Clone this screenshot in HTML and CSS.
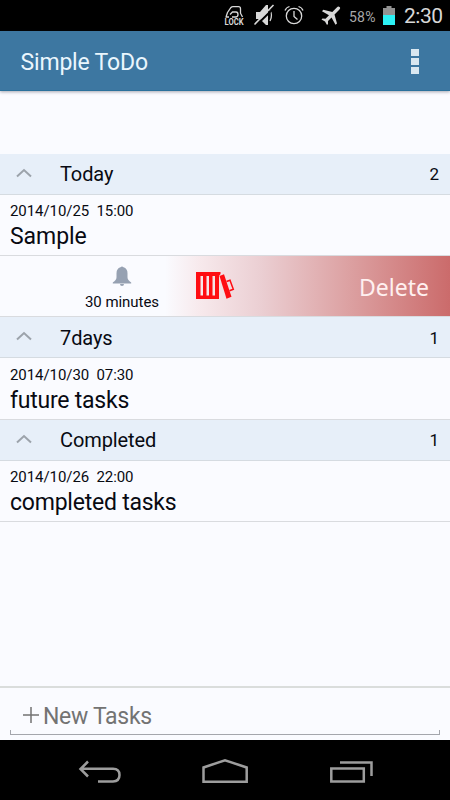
FILE: index.html
```html
<!DOCTYPE html>
<html lang="en">
<head>
<meta charset="utf-8">
<title>Simple ToDo</title>
<link rel="stylesheet" href="styles.css">
</head>
<body>
<div class="phone">
  <div class="status">
    <svg class="status-icons" width="140" height="31" viewBox="0 0 140 31" fill="none" stroke="#d8d8d8" stroke-width="1.300">
      <path d="M5.500 17H9M7.500 12.500l3.500-5q.7-.8 2-.8h5.500q2 0 2 2v4.500l2 3.800M7.500 12.500L6 17M12 17h3.500q2.500 0 2.500-2.500t-2-2.500h-3.500L10 14.500"/>
      <text class="lock" x="4.500" y="25" textLength="19" lengthAdjust="spacingAndGlyphs">LOCK</text>
      <path fill="#d8d8d8" stroke="none" d="M36 12h4l6-7h2v20h-2l-6-6h-4z"/>
      <path d="M50 10q3 5 0 11"/>
      <path stroke="#000" stroke-width="2" d="M36 25.500L55 7"/>
      <path stroke-width="1.600" d="M34.500 24.500L53.500 5"/>
      <circle cx="74" cy="16" r="7.700"/>
      <path d="M74 11v5.500l3.500 3M65 10.500q1-3 4.500-4M83 10.500q-1-3-4.500-4"/>
      <path fill="#d8d8d8" stroke="none" d="M119.500 7q1.500 1-.5 3l-4.500 4.500 2.500 9-1.500 1.300-4-7.300-3.500 3.500v3l-1 1-2-3.500-3.500-2 1-1 3 .2 3.500-3.500-7-4 1.300-1.500 9 2.300 4.500-4.500q1.500-1.500 2.700-.5z"/>
    </svg>
    <span class="percent">58%</span>
    <svg class="battery" width="12" height="20" viewBox="0 0 12 20">
      <path fill="#929292" d="M3.500 0h5v2H12v7H0V2h3.500z"/>
      <path fill="#2cf1f5" d="M0 9h12v10H0z"/>
    </svg>
    <span class="clock">2:30</span>
  </div>
  <header class="appbar">
    <h1>Simple ToDo</h1>
    <div class="more"><i></i><i></i><i></i></div>
  </header>
  <main class="list">
    <div class="group"><svg class="chevron" width="16" height="10" viewBox="0 0 16 10"><path d="M1 8.500L8 2l7 6.500"/></svg><span class="name">Today</span><span class="count">2</span></div>
    <div class="task"><span class="date">2014/10/25&nbsp; 15:00</span><span class="title sample">Sample</span></div>
    <div class="swipe">
      <div class="remind">
        <svg width="20" height="20" viewBox="0 0 20 20" fill="#96a1b2"><path d="M8.500 1.200q1.500-1.500 3 0 4 1.300 4 6v4q0 3 3.700 5.300v1H.8v-1Q4.500 14.200 4.500 11.200v-4q0-4.700 4-6zM8 18h4q0 2-2 2t-2-2z"/></svg>
        <span>30 minutes</span>
      </div>
      <svg class="trash" width="39" height="30" viewBox="0 0 39 30">
        <path fill="#ff0d12" fill-rule="evenodd" d="M0 1h24.500v2L23 5v23H0zM4.500 5v19.500H7V5zM10.500 5v19.500H13V5zM16.500 5v19.500H19V5z"/>
        <path fill="#ff0d12" d="M23.500 5l4.500-1.700 7.500 22.500-5 2z"/>
        <path fill="none" stroke="#ff0d12" stroke-width="1.500" d="M30.500 10.500l3.500-1.300 3.300 9-3.800 1.500"/>
      </svg>
      <span class="delete">Delete</span>
    </div>
    <div class="group"><svg class="chevron" width="16" height="10" viewBox="0 0 16 10"><path d="M1 8.500L8 2l7 6.500"/></svg><span class="name days">7days</span><span class="count days">1</span></div>
    <div class="task last"><span class="date">2014/10/30&nbsp; 07:30</span><span class="title">future tasks</span></div>
    <div class="group"><svg class="chevron" width="16" height="10" viewBox="0 0 16 10"><path d="M1 8.500L8 2l7 6.500"/></svg><span class="name">Completed</span><span class="count">1</span></div>
    <div class="task"><span class="date">2014/10/26&nbsp; 22:00</span><span class="title">completed tasks</span></div>
  </main>
  <div class="compose">
    <div class="field">
      <svg width="16" height="16" viewBox="0 0 16 16"><path d="M8 0v16M0 8h16" stroke="#737373" stroke-width="1.500"/></svg>
      <span>New Tasks</span>
    </div>
  </div>
  <nav class="nav">
    <svg width="450" height="60" viewBox="0 0 450 60" fill="none" stroke="#9d9d9d" stroke-width="2.500">
      <path d="M88 21.500L80.500 29l7.500 7.500M81 28.700h32q6.500 0 6.500 6.300t-6.500 6.500H98"/>
      <path d="M203.500 41.700V27.500L225 20.200l21.700 7.300v14.200z"/>
      <path d="M331.300 28.500h32.500v13h-32.500zM340 22.500h31.500V36"/>
    </svg>
  </nav>
</div>
</body>
</html>
```

FILE: styles.css
```css
* { box-sizing: border-box; }
body { margin: 0; background: #fafbff; font-family: Roboto, "Liberation Sans", sans-serif; color: #080a12; }
svg { display: block; flex: none; }
.phone { width: 450px; height: 800px; display: flex; flex-direction: column; overflow: hidden; }
.status { height: 31px; background: #000; display: flex; align-items: center; padding-left: 220px; color: #d8d8d8; white-space: nowrap; flex: none; }
.lock { font: bold 8.5px Roboto, sans-serif; fill: #d8d8d8; stroke: none; }
.percent { width: 34px; margin-left: -11px; font-size: 14px; letter-spacing: .2px; color: #a8a8a8; padding-top: 2px; }
.battery { margin-top: 1px; }
.clock { margin-left: 9px; font-size: 21px; letter-spacing: -.5px; line-height: 31px; padding-top: 2px; }
.appbar { height: 60px; flex: none; background: #3d77a1; border-bottom: 1px solid #2b719c; box-shadow: 0 1px 3px rgba(40, 40, 60, .4); display: flex; align-items: center; justify-content: space-between; padding: 2px 31px 0 20.5px; }
h1 { margin: 2px 0 0; font-size: 23px; font-weight: 400; color: #eaf6fd; letter-spacing: -.18px; }
.more { display: flex; flex-direction: column; gap: 2px; }
.more i { width: 8px; height: 7px; background: #d9e7f0; }
.list { flex: 1; padding-top: 63px; }
.group { height: 41px; background: #e7eff9; border-bottom: 1px solid #d5dbe1; display: flex; align-items: center; padding: 0 11px 0 16px; }
.chevron { fill: none; stroke: #9ca3ab; stroke-width: 2; margin-top: -3px; }
.name { margin-left: 28px; font-size: 20px; flex: 1; letter-spacing: -.1px; }
.count { font-size: 17px; }
.days { padding-top: 2px; }
.task { height: 61px; border-bottom: 1px solid #d9dbdf; padding: 7px 10px 0; display: flex; flex-direction: column; }
.task.last { height: 62px; padding-top: 8px; }
.date { font-size: 15px; line-height: 18px; letter-spacing: -.07px; }
.title { font-size: 23px; line-height: 30px; margin-top: 2px; letter-spacing: -.23px; }
.sample { letter-spacing: -.05px; }
.swipe { height: 61px; border-bottom: 1px solid #d9dbdf; display: flex; align-items: center; background: linear-gradient(90deg, #fafbff 165px, #f7e9ec 200px, #ebcfd3 260px, #dca0a1 350px, #cb6b6b 450px); padding-right: 21px; }
.remind { width: 74px; margin-left: 85px; display: flex; flex-direction: column; align-items: center; font-size: 15px; letter-spacing: -.05px; line-height: 18px; white-space: nowrap; gap: 7px; padding-top: 5px; }
.trash { margin-left: 37px; }
.delete { margin: 2px 0 0 auto; font-family: "Noto Sans", sans-serif; font-size: 23px; color: #fff0f0; }
.compose { height: 54px; flex: none; border-top: 2px solid #dadddc; padding: 0 10px 5px; display: flex; align-items: stretch; }
.field { flex: 1; display: flex; align-items: center; gap: 4px; padding: 8px 0 0 13px; color: #737373; font-size: 23px; letter-spacing: -.3px; border-bottom: 1px solid #a4a6ac; background: linear-gradient(#a4a6ac, #a4a6ac) left bottom / 1px 4px no-repeat, linear-gradient(#a4a6ac, #a4a6ac) right bottom / 1px 4px no-repeat; }
.field span { padding-top: 2px; }
.nav { height: 60px; flex: none; background: #000; }
```
